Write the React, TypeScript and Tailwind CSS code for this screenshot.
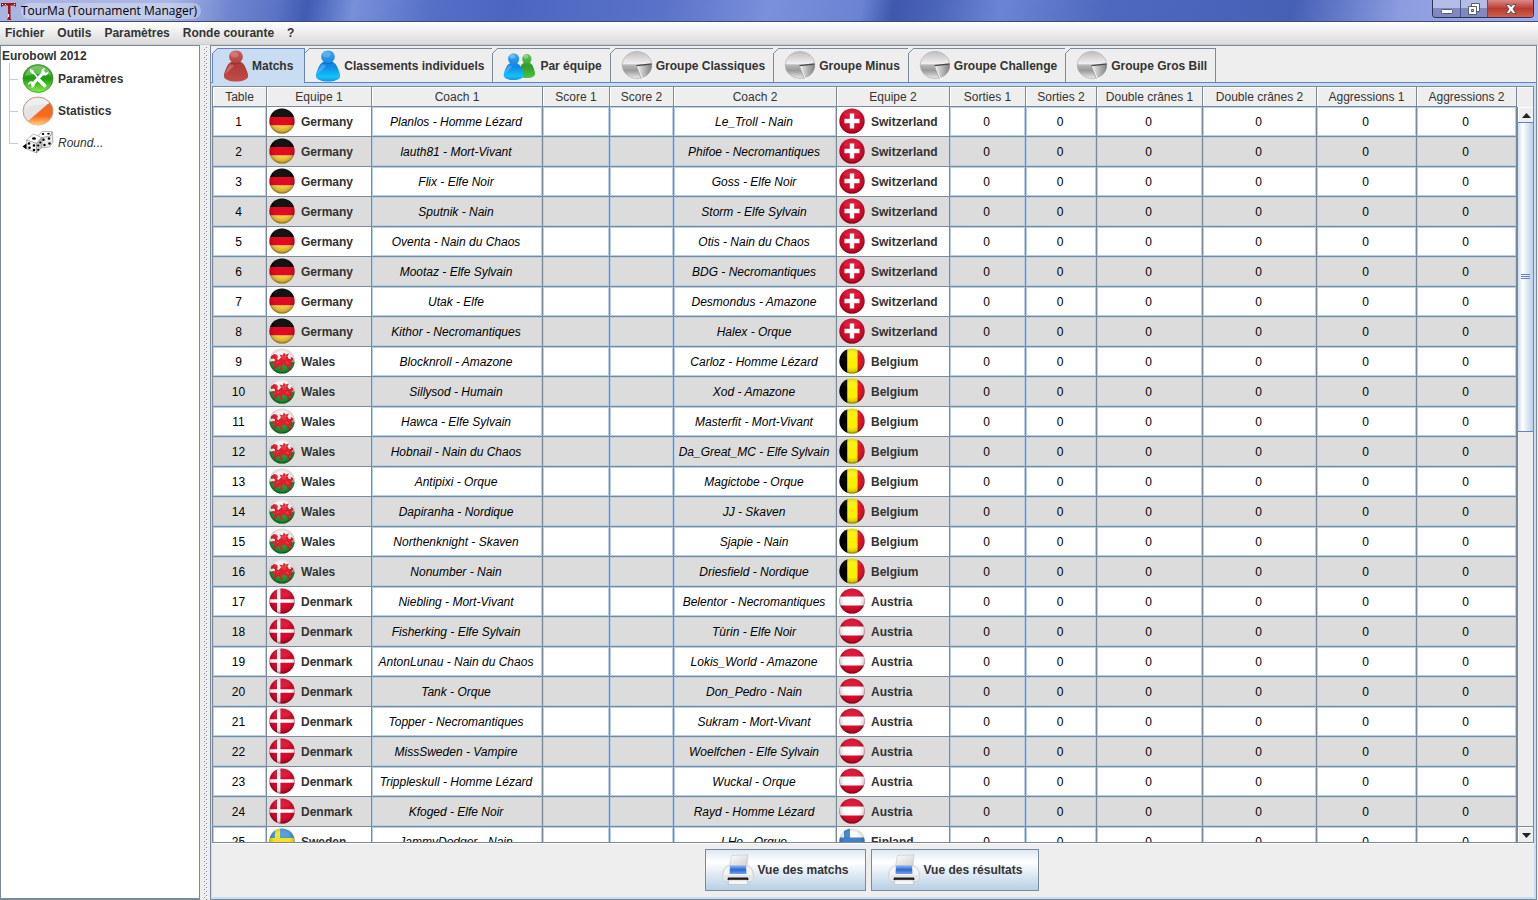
import React from "react";

type Country =
  | "Germany" | "Switzerland" | "Wales" | "Belgium"
  | "Denmark" | "Austria" | "Sweden" | "Finland";

type Match = { home: Country; coach1: string; coach2: string; away: Country };

const group = (home: Country, away: Country, pairs: [string, string][]): Match[] =>
  pairs.map(([coach1, coach2]) => ({ home, coach1, coach2, away }));

const matches: Match[] = [
  ...group("Germany", "Switzerland", [
    ["Planlos - Homme Lézard", "Le_Troll - Nain"],
    ["lauth81 - Mort-Vivant", "Phifoe - Necromantiques"],
    ["Flix - Elfe Noir", "Goss - Elfe Noir"],
    ["Sputnik - Nain", "Storm - Elfe Sylvain"],
    ["Oventa - Nain du Chaos", "Otis - Nain du Chaos"],
    ["Mootaz - Elfe Sylvain", "BDG - Necromantiques"],
    ["Utak - Elfe", "Desmondus - Amazone"],
    ["Kithor - Necromantiques", "Halex - Orque"],
  ]),
  ...group("Wales", "Belgium", [
    ["Blocknroll - Amazone", "Carloz - Homme Lézard"],
    ["Sillysod - Humain", "Xod - Amazone"],
    ["Hawca - Elfe Sylvain", "Masterfit - Mort-Vivant"],
    ["Hobnail - Nain du Chaos", "Da_Great_MC - Elfe Sylvain"],
    ["Antipixi - Orque", "Magictobe - Orque"],
    ["Dapiranha - Nordique", "JJ - Skaven"],
    ["Northenknight - Skaven", "Sjapie - Nain"],
    ["Nonumber - Nain", "Driesfield - Nordique"],
  ]),
  ...group("Denmark", "Austria", [
    ["Niebling - Mort-Vivant", "Belentor - Necromantiques"],
    ["Fisherking - Elfe Sylvain", "Tùrin - Elfe Noir"],
    ["AntonLunau - Nain du Chaos", "Lokis_World - Amazone"],
    ["Tank - Orque", "Don_Pedro - Nain"],
    ["Topper - Necromantiques", "Sukram - Mort-Vivant"],
    ["MissSweden - Vampire", "Woelfchen - Elfe Sylvain"],
    ["Trippleskull - Homme Lézard", "Wuckal - Orque"],
    ["Kfoged - Elfe Noir", "Rayd - Homme Lézard"],
  ]),
  ...group("Sweden", "Finland", [["JammyDodger - Nain", "LHo - Orque"]]),
];

const columns = [
  { label: "Table", col: "w-[54px]" },
  { label: "Equipe 1", col: "w-[105px]" },
  { label: "Coach 1", col: "w-[171px]" },
  { label: "Score 1", col: "w-[67px]" },
  { label: "Score 2", col: "w-[64px]" },
  { label: "Coach 2", col: "w-[163px]" },
  { label: "Equipe 2", col: "w-[113px]" },
  { label: "Sorties 1", col: "w-[76px]" },
  { label: "Sorties 2", col: "w-[71px]" },
  { label: "Double crânes 1", col: "w-[106px]" },
  { label: "Double crânes 2", col: "w-[114px]" },
  { label: "Aggressions 1", col: "w-[100px]" },
  { label: "Aggressions 2", col: "w-[100px]" },
];

function SharedGradients() {
  return (
    <svg width="0" height="0" className="absolute" aria-hidden="true">
      <defs>
        <radialGradient id="gloss" cx="50%" cy="45%" r="56%">
          <stop offset="0.55" stopColor="#000" stopOpacity="0" />
          <stop offset="0.82" stopColor="#000" stopOpacity="0.14" />
          <stop offset="1" stopColor="#000" stopOpacity="0.55" />
        </radialGradient>
        <clipPath id="disc"><circle cx="13" cy="13" r="12.6" /></clipPath>
        <linearGradient id="red" x1="0" y1="0" x2="0" y2="1">
          <stop offset="0" stopColor="#cf5a57" /><stop offset="0.5" stopColor="#b23c3a" /><stop offset="1" stopColor="#c44c48" />
        </linearGradient>
        <linearGradient id="blue" x1="0" y1="0" x2="0" y2="1">
          <stop offset="0" stopColor="#3fa3ee" /><stop offset="0.5" stopColor="#0f86e6" /><stop offset="0.85" stopColor="#12c4fa" /><stop offset="1" stopColor="#1792e4" />
        </linearGradient>
        <linearGradient id="green" x1="0" y1="0" x2="0" y2="1">
          <stop offset="0" stopColor="#6cc75c" /><stop offset="0.5" stopColor="#2f9c2c" /><stop offset="1" stopColor="#4fc43f" />
        </linearGradient>
        <linearGradient id="silver" x1="0" y1="0" x2="0" y2="1">
          <stop offset="0" stopColor="#bdbdbd" /><stop offset="0.45" stopColor="#f0f0f0" /><stop offset="0.5" stopColor="#b8b8b8" /><stop offset="0.7" stopColor="#999" /><stop offset="1" stopColor="#ececec" />
        </linearGradient>
        <linearGradient id="slice" x1="0" y1="0" x2="1" y2="0">
          <stop offset="0" stopColor="#ededed" /><stop offset="1" stopColor="#808080" />
        </linearGradient>
        <linearGradient id="lime" x1="0" y1="0" x2="0" y2="1">
          <stop offset="0" stopColor="#58b53a" /><stop offset="0.5" stopColor="#1d9d12" /><stop offset="1" stopColor="#85f04a" />
        </linearGradient>
        <linearGradient id="orange" x1="0" y1="0" x2="0" y2="1">
          <stop offset="0" stopColor="#e06a30" /><stop offset="0.6" stopColor="#fb6a1c" /><stop offset="1" stopColor="#ffd27a" />
        </linearGradient>
        <linearGradient id="paper" x1="0" y1="0" x2="1" y2="1">
          <stop offset="0" stopColor="#fff" /><stop offset="1" stopColor="#cfcfcf" />
        </linearGradient>
        <linearGradient id="ink" x1="0" y1="0" x2="0" y2="1">
          <stop offset="0" stopColor="#8fb8f4" /><stop offset="0.5" stopColor="#2f66cf" /><stop offset="1" stopColor="#6ea2f2" />
        </linearGradient>
      </defs>
    </svg>
  );
}

const flagArt: Record<Country, React.ReactNode> = {
  Germany: (
    <>
      <rect width="26" height="9" />
      <rect y="9" width="26" height="8.5" fill="#e20a20" />
      <rect y="17.5" width="26" height="9" fill="#f3cb3c" />
    </>
  ),
  Switzerland: (
    <>
      <rect width="26" height="26" fill="#dc0a2c" />
      <path d="M10.8 5.5h4.4v5.3h5.3v4.4h-5.3v5.3h-4.4v-5.3H5.500v-4.400h5.300z" fill="#fff" />
    </>
  ),
  Wales: (
    <>
      <rect width="26" height="13.5" fill="#f6f6f6" />
      <rect y="13.5" width="26" height="13" fill="#1f9a36" />
      <path
        d="M2 8.500L5 6l2.500 0.500L9 8.500 8 11l1.500 1L12 9.500 10.500 6.500l3 0.800L15 4.500l1.500 2L20 5.500l-1.500 3 1.500 2.500h2l-0.500-2L24 10l0.500 3-1.500-0.500-0.500 1.500 1 2-1.500 2.500-2-1 0.500 2 2 1.500-1 0.800-3-1.300-1-2.500-2-1.500-2 0.500-1 1.500 1.500 2.500-1 0.800-3-1 1.500-0.800-1-2-2 0.500-2.500 2-2-0.500 1-1.500L6 15.800 4 15l-1.500 1L2 14.500l2-1.500 1.500 0.500L6 11.500 4.500 10.500 2 11z"
        fill="#e01f2d"
      />
      <path d="M13.5 8l1 3.5M16.5 7.5l-0.5 4M10 14l-2 0.5M17 14l2.500 1.500" stroke="#f7b9b9" strokeWidth="0.5" opacity="0.7" />
    </>
  ),
  Belgium: (
    <>
      <rect width="8.5" height="26" />
      <rect x="8.5" width="10" height="26" fill="#fbf000" />
      <rect x="18.5" width="8" height="26" fill="#e4162e" />
    </>
  ),
  Denmark: (
    <>
      <rect width="26" height="26" fill="#dc0a2c" />
      <path d="M8 0h3.400v11.200H26v3.600H11.400V26H8V14.800H0v-3.600h8z" fill="#fff" />
    </>
  ),
  Austria: (
    <>
      <rect width="26" height="26" fill="#dc0a2c" />
      <rect y="8.5" width="26" height="9" fill="#fff" />
    </>
  ),
  Sweden: (
    <>
      <rect width="26" height="26" fill="#4a9bd8" />
      <path d="M6 0h5v10h15v6H11v10H6V16H0v-6h6z" fill="#f8e020" />
    </>
  ),
  Finland: (
    <>
      <rect width="26" height="26" fill="#fbfbfb" />
      <path d="M5 0h6v9.500h15v6H11V26H5V15.500H0v-6h5z" fill="#4181cc" />
    </>
  ),
};

function Flag({ country }: { country: Country }) {
  return (
    <svg viewBox="0 0 26 26" className="mb-0.5 size-[26px] shrink-0" aria-hidden="true">
      <g clipPath="url(#disc)">
        {flagArt[country]}
        <ellipse cx="13" cy="5" rx="9" ry="4.5" fill="#fff" opacity="0.08" />
      </g>
      <circle cx="13" cy="13" r="12.6" fill="url(#gloss)" />
    </svg>
  );
}

const pawnPath =
  "M13 0.500c4 0 6.800 2.900 6.800 6.300 0 2.200-1 3.900-2.500 5 2.300 0.900 4 2.700 5.200 5.700 1.100 2.700 2.600 5.500 2.600 8.500 0 3.600-5.400 5.500-12.100 5.500S0.900 29.600 0.900 26c0-3 1.500-5.800 2.600-8.500 1.200-3 2.900-4.800 5.200-5.700-1.500-1.100-2.500-2.800-2.500-5C6.200 3.400 9 0.500 13 0.500z";

function Pawn({ fill }: { fill: string }) {
  return (
    <svg viewBox="0 0 26 32" className="h-8 w-[26px] shrink-0" aria-hidden="true">
      <path d={pawnPath} fill={fill} />
      <ellipse cx="11.5" cy="4.5" rx="4" ry="3" fill="#fff" opacity="0.2" />
      <path d="M8.700 11.800c2.500 1.600 6.100 1.600 8.600 0l1.500 1c-3 2.200-8.600 2.200-11.600 0z" fill="#000" opacity="0.18" />
      <path d="M7 14.500c-2 2.500-4.500 6.500-4.500 10 3-4 7-6 8.500-9z" fill="#fff" opacity="0.22" />
    </svg>
  );
}

function PawnPair() {
  return (
    <svg viewBox="0 0 34 32" className="h-8 w-[34px] shrink-0" aria-hidden="true">
      <g transform="translate(15 3.5) scale(0.68 0.78)">
        <path d={pawnPath} fill="url(#green)" />
        <ellipse cx="11.5" cy="4" rx="3.5" ry="2.6" fill="#fff" opacity="0.3" />
      </g>
      <g transform="translate(0 3) scale(0.82 0.86)">
        <path d={pawnPath} fill="url(#blue)" />
        <ellipse cx="11.5" cy="4" rx="3.5" ry="2.6" fill="#fff" opacity="0.3" />
        <path d="M7 14.500c-2 2.500-4.500 6.500-4.500 10 3-4 7-6 8.500-9z" fill="#fff" opacity="0.22" />
      </g>
    </svg>
  );
}

function Pie() {
  return (
    <svg viewBox="0 0 32 32" className="size-8 shrink-0" aria-hidden="true">
      <ellipse cx="16" cy="15" rx="14.8" ry="13.6" fill="url(#silver)" stroke="#a8a8a8" strokeWidth="0.6" />
      <path d="M16 16l14.800-1.500c0.500 6-4 11.500-9.500 13.500z" fill="url(#slice)" />
      <path d="M16 16l5.500 13.500 2.500-1.500" fill="none" stroke="#fafafa" strokeWidth="1.2" />
      <path d="M15.500 15.700l15-1.700" stroke="#4a4a4a" strokeWidth="1.3" />
      <path d="M15.500 16l5 13" stroke="#909090" strokeWidth="0.6" />
    </svg>
  );
}

function ToolsIcon() {
  return (
    <svg viewBox="0 0 32 32" className="size-8 shrink-0" aria-hidden="true">
      <ellipse cx="16" cy="15.5" rx="15" ry="14" fill="url(#lime)" stroke="#3c8f2c" strokeWidth="0.8" />
      <path d="M3 13C5 5 11 3 16 3s11 2 13 9c-8-2-18-1-26 1z" fill="#fff" opacity="0.25" />
      <path d="M10.500 21.500L21.500 9.500" stroke="#fff" strokeWidth="3.2" strokeLinecap="round" />
      <path d="M20 11c-1.500-3 0-5.500 3-6l-1.500 3 2 2 3-1.500c0 3.500-3 5-6 3.500z" fill="#fff" />
      <path d="M12 20c1.500 3 0 4.500-3 5l1.200-2.600-1.800-1.800L6 22c0-3.500 3-4.500 5.500-3z" fill="#fff" />
      <path d="M9.500 7.500l6 7" stroke="#fff" strokeWidth="1.5" />
      <path d="M8 6l3 1 1 3-1.500 1L8 8.500z" fill="#fff" />
      <path d="M17 17l5.500 5.500" stroke="#fff" strokeWidth="3.6" strokeLinecap="round" />
    </svg>
  );
}

function StatsIcon() {
  return (
    <svg viewBox="0 0 32 32" className="size-8 shrink-0" aria-hidden="true">
      <ellipse cx="16" cy="16" rx="15" ry="14" fill="#e4e4e4" stroke="#a9866f" strokeWidth="0.8" />
      <path d="M27.500 7.500c5 6 4 14-2 19s-14 4.500-20 0z" fill="url(#orange)" />
      <path d="M3 13C5 5 11 3 16 3s9 2 11.500 6C19 9 10 10 3 13z" fill="#fff" opacity="0.4" />
    </svg>
  );
}

function DiceIcon() {
  return (
    <svg viewBox="0 0 32 32" className="size-8 shrink-0" aria-hidden="true">
      <g stroke="#777" strokeWidth="0.5" strokeLinejoin="round">
        <path d="M16 9l4-4.500 10 0-1.500 4.500-10 2z" fill="#fff" />
        <path d="M18.500 11l10-2L30.500 5 31 15l-3.500 5-8 1z" fill="#e8e8e8" />
        <path d="M4.500 13l7-6 8 3.500-5 6z" fill="#fff" />
        <path d="M4.500 13l10 3.500 0 9.500L5 22z" fill="#f4f4f4" />
        <path d="M14.500 16.500l5.500-6v9.500l-5.500 6z" fill="#c4c4c4" />
      </g>
      <g>
        <ellipse cx="21" cy="7" rx="1.3" ry="0.9" /><ellipse cx="26.5" cy="6.7" rx="1.3" ry="0.9" />
        <circle cx="21.5" cy="12.8" r="1.2" /><circle cx="27" cy="11.5" r="1.2" />
        <circle cx="22.5" cy="18" r="1.2" /><circle cx="27.5" cy="16.5" r="1.2" />
        <ellipse cx="12" cy="11.5" rx="2" ry="1.3" />
        <circle cx="7" cy="16.5" r="1.3" /><circle cx="12" cy="18.5" r="1.3" />
        <circle cx="7.5" cy="20.8" r="1.3" /><circle cx="12" cy="23" r="1.3" />
        <circle cx="16.2" cy="18.5" r="1.1" /><circle cx="18.3" cy="15.5" r="1.1" /><circle cx="16.3" cy="22.8" r="1.1" />
        <path d="M0.500 19.500l4-3v6z" />
      </g>
    </svg>
  );
}

function PrinterIcon() {
  return (
    <svg viewBox="0 0 32 32" className="size-8 shrink-0" aria-hidden="true">
      <path d="M9.500 1.500L26 0.800l-1 11H7.500z" fill="url(#paper)" stroke="#b9b9b9" strokeWidth="0.5" />
      <path d="M3 14c1-1.500 3-2 4-2h18c1 0 3 0.500 4 2l2 4v6c0 2-1 3-3 3H4c-2 0-3-1-3-3v-6z" fill="#f4f4f4" stroke="#b5b5b5" strokeWidth="0.6" />
      <path d="M8 11.500h16l0.500 8.500h-17z" fill="url(#ink)" />
      <path d="M1 21h30v3c0 2-1 3-3 3H4c-2 0-3-1-3-3z" fill="#e6e6e6" />
      <path d="M6 23.500h20l0.500 2.500h-21z" fill="#1c1c1c" />
      <path d="M7 26h18l1 4.500H6z" fill="#f6f6f6" stroke="#aaa" strokeWidth="0.5" />
    </svg>
  );
}

const pie = <Pie />;
const tabs = [
  { label: "Matchs", icon: <Pawn fill="url(#red)" /> },
  { label: "Classements individuels", icon: <Pawn fill="url(#blue)" /> },
  { label: "Par équipe", icon: <PawnPair /> },
  { label: "Groupe Classiques", icon: pie },
  { label: "Groupe Minus", icon: pie },
  { label: "Groupe Challenge", icon: pie },
  { label: "Groupe Gros Bill", icon: pie },
];

function TitleBar() {
  return (
    <header className="flex h-[22px] shrink-0 items-start justify-between border-b border-[#3f4a73] bg-[linear-gradient(100deg,#a9b4e0_0%,#aab6e4_11%,#6f85d0_15%,#5c74c6_18%,#3f5bb4_20%,#7890da_23%,#5670c8_28%,#4c66c0_33%,#5a72c8_43%,#7a90dc_50%,#6a82d2_56%,#3f58ae_58%,#4c66ba_61%,#6c84d4_65%,#4d68be_72%,#4660b6_84%,#8c9ce0_91%,#a3afe6_100%)]">
      <div className="flex h-[21px] items-center gap-1 pl-px">
        <svg viewBox="0 0 16 18" className="h-[18px] w-4" aria-hidden="true">
          <path d="M0 1h15v4l-2-1.500H9.500v12.500l1 2H6l1-2V3.500H3L0 5z" fill="#a31414" />
          <path d="M1 2h1v1H1zM13 2h1v1h-1zM4 2h1v1H4zM7 12h1v3H7z" fill="#fff" />
        </svg>
        <h1 className="rounded-full bg-white/30 pr-1 font-['Open_Sans','Noto_Sans',sans-serif] text-xs leading-4 text-black">TourMa (Tournament Manager)</h1>
      </div>
      <div className="mr-1 flex h-[18px] overflow-hidden rounded-b-[4px] border border-t-0 border-[#2b3358]">
        <button aria-label="Réduire" className="flex w-7 items-center justify-center border-r border-[#4b5585] bg-linear-to-b from-[#b4bde6] from-50% to-[#8088bd] to-50%">
          <svg viewBox="0 0 14 14" className="size-3.5" aria-hidden="true"><rect x="1.5" y="7.5" width="11" height="4" rx="1" fill="#fff" stroke="#555b70" /></svg>
        </button>
        <button aria-label="Restaurer" className="flex w-[27px] items-center justify-center border-r border-[#4b5585] bg-linear-to-b from-[#b4bde6] from-50% to-[#8088bd] to-50%">
          <svg viewBox="0 0 14 14" className="size-3.5" aria-hidden="true">
            <path d="M4.500 1.500h8v8h-8z" fill="#fff" stroke="#555b70" />
            <path d="M1.500 4.500h8v8h-8z" fill="#fff" stroke="#555b70" />
            <path d="M4.500 7.500h2v2h-2z" fill="#a6b0de" stroke="#555b70" />
          </svg>
        </button>
        <button aria-label="Fermer" className="flex w-[45px] items-center justify-center bg-linear-to-b from-[#d98a86] via-[#b93a31] via-50% to-[#d06048]">
          <svg viewBox="0 0 14 12" className="h-3 w-3.5" aria-hidden="true">
            <path d="M2 1.500h3l2 2.200 2-2.200h3L9 6l3 4.500H9L7 8.300l-2 2.200H2L5 6z" fill="#fff" stroke="#4c4a58" strokeWidth="0.9" />
          </svg>
        </button>
      </div>
    </header>
  );
}

function MenuBar() {
  return (
    <nav className="flex h-[23px] shrink-0 items-center gap-[13px] border-b border-[#ccc] bg-linear-to-b from-white to-[#dadada] pl-[5px] font-bold">
      {["Fichier", "Outils", "Paramètres", "Ronde courante", "?"].map((item) => (
        <button key={item}>{item}</button>
      ))}
    </nav>
  );
}

function Tree() {
  const nodes = [
    { label: "Paramètres", icon: <ToolsIcon />, style: "font-bold" },
    { label: "Statistics", icon: <StatsIcon />, style: "font-bold" },
    { label: "Round...", icon: <DiceIcon />, style: "italic" },
  ];
  return (
    <aside className="w-[200px] shrink-0 border border-b-2 border-[#7a8a99] bg-white">
      <div className="flex h-[17px] items-center pl-px pt-0.5 font-bold">Eurobowl 2012</div>
      <ul>
        {nodes.map(({ label, icon, style }, i) => (
          <li key={label} className="flex h-8 items-center pl-2">
            <span className="mr-1 flex w-[9px] flex-col self-stretch">
              <span className="h-[17px] border-b border-l border-[#b8cfe5]" />
              {i < nodes.length - 1 && <span className="flex-1 border-l border-[#b8cfe5]" />}
            </span>
            {icon}
            <span className={`pl-1 ${style}`}>{label}</span>
          </li>
        ))}
      </ul>
    </aside>
  );
}

function Divider() {
  return (
    <svg className="w-2.5 shrink-0 self-stretch" height="100%" aria-hidden="true">
      <defs>
        <pattern id="bumps" width="4" height="4" patternUnits="userSpaceOnUse">
          <rect width="1" height="1" fill="#7a8a99" />
          <rect x="1" y="1" width="1" height="1" fill="#fff" />
          <rect x="2" y="2" width="1" height="1" fill="#7a8a99" />
          <rect x="3" y="3" width="1" height="1" fill="#fff" />
        </pattern>
      </defs>
      <rect x="4" y="2" width="4" height="100%" fill="url(#bumps)" />
    </svg>
  );
}

function TabStrip() {
  return (
    <div role="tablist" className="flex h-9 shrink-0 pl-px pt-0.5">
      {tabs.map(({ label, icon }, i) => {
        const selected = i === 0;
        return (
          <button
            key={label}
            role="tab"
            aria-selected={selected}
            className={`relative flex items-center gap-[3px] border-r border-t pl-2.5 font-bold whitespace-nowrap ${
              selected ? "z-10 -mb-px border-l border-[#6382bf] bg-[#c8ddf2] pr-[11px]" : "border-[#7a8a99] pr-2"
            }`}
          >
            <svg viewBox="0 0 6 6" className="absolute -left-px -top-px size-1.5" aria-hidden="true">
              <path d="M0 0h6L0 6z" fill="#eee" />
              <path d="M0 6L6 0" stroke={selected ? "#6382bf" : "#7a8a99"} />
            </svg>
            {icon}
            {label}
          </button>
        );
      })}
    </div>
  );
}

const gridCell = "border-b border-r border-[#7a8a99] py-0";
const innerCell = "pr-0.5 pl-0 text-center shadow-[inset_0_0_0_1px_#b8cfe5]";

function TeamCell({ country }: { country: Country }) {
  return (
    <td className={`${gridCell} px-0`}>
      <div className="flex items-center gap-1.5 pl-0.5 font-bold text-[#333]">
        <Flag country={country} />
        {country}
      </div>
    </td>
  );
}

function MatchTable() {
  return (
    <div className="min-w-0 flex-1 overflow-y-auto [scrollbar-width:none]">
      <table className="w-full table-fixed border-separate border-spacing-0 whitespace-nowrap text-black">
        <colgroup>
          {columns.map(({ label, col }) => <col key={label} className={col} />)}
        </colgroup>
        <thead className="sticky top-0 z-10">
          <tr className="h-5">
            {columns.map(({ label }) => (
              <th key={label} className="border-b border-r border-[#7a8a99] bg-[#eee] px-0 pt-px pb-0 font-normal text-[#333] shadow-[inset_1px_1px_0_#fff]">
                {label}
              </th>
            ))}
          </tr>
        </thead>
        <tbody>
          {matches.map((m, i) => (
            <tr key={i} className="h-[30px] bg-white even:bg-[#dcdcdc]">
              <td className={`${gridCell} ${innerCell}`}>{i + 1}</td>
              <TeamCell country={m.home} />
              <td className={`${gridCell} ${innerCell} italic`}>{m.coach1}</td>
              <td className={`${gridCell} ${innerCell}`} />
              <td className={`${gridCell} ${innerCell}`} />
              <td className={`${gridCell} ${innerCell} italic`}>{m.coach2}</td>
              <TeamCell country={m.away} />
              {columns.slice(7).map(({ label }) => (
                <td key={label} className={`${gridCell} ${innerCell}`}>0</td>
              ))}
            </tr>
          ))}
        </tbody>
      </table>
    </div>
  );
}

function ScrollArrow({ label, d }: { label: string; d: string }) {
  return (
    <button aria-label={label} className="flex h-[15px] shrink-0 items-center justify-center border-t border-l border-white bg-[#eee]">
      <svg viewBox="0 0 9 5" className="h-[5px] w-[9px]" aria-hidden="true"><path d={d} fill="#222" /></svg>
    </button>
  );
}

function ScrollBar() {
  return (
    <div className="flex w-4 shrink-0 flex-col">
      <div className="h-5 shrink-0 border-t border-white" />
      <div className="flex min-h-0 flex-1 flex-col border-l border-[#7a8a99]">
        <ScrollArrow label="Défiler vers le haut" d="M0 5L4.5 0 9 5z" />
        <div className="min-h-0 flex-1">
          <div className="flex h-[44%] flex-col items-center justify-center gap-px border-y border-[#6382bf] bg-linear-to-r from-[#c8ddf2] via-white via-30% to-[#b8cfe5]">
            <span className="h-px w-[9px] bg-[#6382bf]" />
            <span className="h-px w-[9px] bg-[#6382bf]" />
            <span className="h-px w-[9px] bg-[#6382bf]" />
          </div>
        </div>
        <div className="flex flex-col border-t border-[#7a8a99]">
          <ScrollArrow label="Défiler vers le bas" d="M0 0h9L4.5 5z" />
        </div>
      </div>
    </div>
  );
}

function PrintButton({ label }: { label: string }) {
  return (
    <button className="flex h-[42px] items-center gap-1 border border-[#7a8a99] bg-linear-to-b from-[#dde8f3] via-white via-30% to-[#b8cfe5] px-4 font-bold">
      <PrinterIcon />
      {label}
    </button>
  );
}

export default function App() {
  return (
    <div className="flex h-screen flex-col overflow-hidden bg-[#eee] font-['Liberation_Sans',Arial,sans-serif] text-xs leading-4 text-[#333]">
      <SharedGradients />
      <TitleBar />
      <MenuBar />
      <div className="flex min-h-0 flex-1">
        <Tree />
        <Divider />
        <main className="mr-px flex min-w-0 flex-1 flex-col border border-[#7a8a99]">
          <TabStrip />
          <div className="flex min-h-0 flex-1 flex-col border-t border-[#6382bf] bg-[#c8ddf2] pt-[3px] pr-0.5 pb-0.5 pl-px">
            <div className="flex min-h-0 flex-1 border border-[#7a8a99] bg-[#eee]">
              <MatchTable />
              <ScrollBar />
            </div>
            <div className="flex h-[54px] shrink-0 justify-center gap-[5px] border-t border-white bg-[#eee] pt-[5px] pr-0.5">
              <PrintButton label="Vue des matchs" />
              <PrintButton label="Vue des résultats" />
            </div>
          </div>
        </main>
      </div>
    </div>
  );
}
